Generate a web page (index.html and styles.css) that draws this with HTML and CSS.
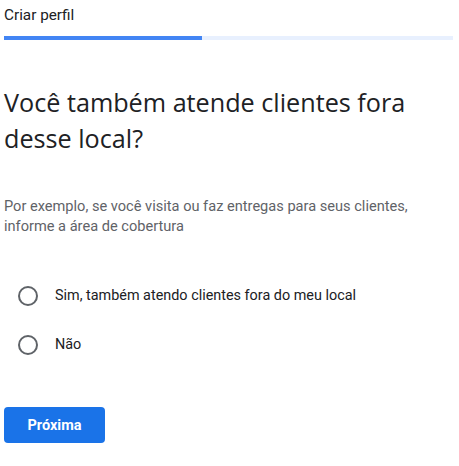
FILE: index.html
```html
<!DOCTYPE html>
<html lang="pt">
<head>
<meta charset="utf-8">
<link rel="stylesheet" href="styles.css">
</head>
<body>
<div class="page">
  <div class="title">Criar perfil</div>
  <div class="progress"><div class="progress-fill" style="width:44%"></div></div>
  <h1 class="heading">Você também atende clientes fora desse local?</h1>
  <p class="desc">Por exemplo, se você visita ou faz entregas para seus clientes, informe a área de cobertura</p>
  <div class="options">
    <label class="option"><span class="radio"></span><span class="opt-label">Sim, também atendo clientes fora do meu local</span></label>
    <label class="option"><span class="radio"></span><span class="opt-label">Não</span></label>
  </div>
  <button class="next">Próxima</button>
</div>
</body>
</html>
```
FILE: styles.css
```css
html, body { margin: 0; padding: 0; background: #fff; }
body { font-family: Roboto, "Liberation Sans", sans-serif; color: #202124; }
.page { padding: 5px 6px 0 4px; width: 449px; }
.title { font-size: 15.3px; line-height: 20px; color: #202124; }
.progress { margin-top: 11px; height: 4px; background: #e8f0fe; }
.progress-fill { height: 4px; background: #4285f4; }
.heading { margin: 44px 0 0; font-family: "Open Sans", Roboto, sans-serif; font-weight: 400; font-size: 25.2px; line-height: 36px; color: #202124; letter-spacing: 0; }
.desc { margin: 40px 0 0; max-width: 415px; font-size: 14.6px; line-height: 20px; color: #5f6368; }
.options { margin-top: 50px; display: flex; flex-direction: column; gap: 29px; }
.option { display: flex; align-items: center; gap: 17px; padding-left: 14px; font-size: 14.4px; line-height: 20px; color: #202124; }
.radio { width: 16px; height: 16px; border: 2px solid #5f6368; border-radius: 50%; flex: none; }
.next { margin-top: 52px; width: 101px; height: 36px; border: none; border-radius: 4px; background: #1a73e8; color: #fff; font-family: Roboto, sans-serif; font-weight: 700; font-size: 14.5px; padding: 0; display: block; }
```
